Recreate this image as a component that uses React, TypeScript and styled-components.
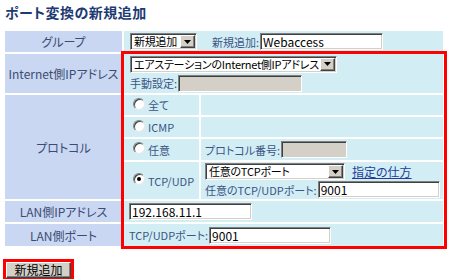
import React from "react";
import styled, { createGlobalStyle } from "styled-components";

const Global = createGlobalStyle`
  html, body { margin: 0; padding: 0; background: #fff; }
  body {
    font-family: "Noto Sans CJK JP", "Noto Sans", sans-serif;
    font-feature-settings: "palt";
    -webkit-font-smoothing: antialiased;
  }
  * { box-sizing: border-box; }
`;

const Page = styled.div`
  width: 450px;
  height: 279px;
  overflow: hidden;
`;

const Title = styled.h1`
  margin: 0;
  padding: 2px 0 0 5px;
  font-size: 14px;
  line-height: 20px;
  letter-spacing: 0.5px;
  font-weight: bold;
  color: #1d3a72;
`;

const TableWrap = styled.div`
  position: relative;
  margin: 7px 0 0 3px;
  width: 442px;
`;

const FormTable = styled.table`
  border-collapse: separate;
  border-spacing: 2px;
  table-layout: fixed;
  width: 442px;
  font-size: 11px;
  color: #3b5584;
`;

const Col = styled.col<{ $w: number }>`
  width: ${(p) => p.$w}px;
`;

const LabelCell = styled.td<{ $h?: number }>`
  padding: 0;
  background: #c9d7f2;
  color: #3b4c72;
  font-size: 12px;
  text-align: center;
  vertical-align: middle;
  white-space: nowrap;
  ${(p) => (p.$h ? `height: ${p.$h}px;` : "")}
`;

const ValueCell = styled.td<{ $h: number }>`
  padding: 0;
  height: ${(p) => p.$h}px;
  background: #d2edf4;
  vertical-align: middle;
  white-space: nowrap;
`;

const Line = styled.div<{ $pl?: number }>`
  display: flex;
  align-items: center;
  padding-left: ${(p) => p.$pl ?? 5}px;
`;

const Stack = styled.div<{ $pl?: number; $gap?: number }>`
  display: flex;
  flex-direction: column;
  align-items: flex-start;
  gap: ${(p) => p.$gap ?? 2}px;
  padding-left: ${(p) => p.$pl ?? 5}px;
`;

const FieldLabel = styled.span<{ $ml?: number }>`
  margin-left: ${(p) => p.$ml ?? 0}px;
  margin-right: 1px;
  font-size: 11px;
  line-height: 14px;
  color: #3b5584;
`;

const SelectBox = styled.span<{ $w: number; $ml?: number }>`
  display: inline-flex;
  align-items: center;
  justify-content: space-between;
  width: ${(p) => p.$w}px;
  height: 17px;
  margin-left: ${(p) => p.$ml ?? 0}px;
  background: #fff;
  border: 1px solid;
  border-color: #808080 #ffffff #ffffff #808080;
  box-shadow: inset 1px 1px 0 #404040, inset -1px -1px 0 #d4d0c8;
  padding: 1px 1px 1px 3px;
`;

const SelectText = styled.span`
  white-space: nowrap;
  font-size: 11px;
  line-height: 15px;
  letter-spacing: -0.25px;
  color: #000;
`;

const ArrowButton = styled.span`
  display: flex;
  flex: none;
  align-items: center;
  justify-content: center;
  width: 15px;
  height: 13px;
  background: #d4d0c8;
  border: 1px solid;
  border-color: #ffffff #404040 #404040 #ffffff;
  box-shadow: inset -1px -1px 0 #808080;
`;

const TextInput = styled.input<{ $w: number; $disabled?: boolean }>`
  width: ${(p) => p.$w}px;
  height: 17px;
  margin: 0;
  padding: 0 2px;
  font-family: inherit;
  font-feature-settings: "palt";
  font-size: 12px;
  color: #000;
  background: ${(p) => (p.$disabled ? "#d4d0c8" : "#fff")};
  border: 1px solid;
  border-color: #808080 #ffffff #ffffff #808080;
  box-shadow: inset 1px 1px 0 #404040, inset -1px -1px 0 #d4d0c8;
  outline: none;
`;

const RadioLine = styled.label`
  display: flex;
  align-items: center;
  padding-left: 9px;
  font-size: 11px;
  color: #3b5584;
`;

const RadioMark = styled.span<{ $checked?: boolean }>`
  position: relative;
  width: 12px;
  height: 12px;
  margin: 0 3px 3px 0;
  border-radius: 50%;
  background: #fff;
  border: 1px solid;
  border-color: #808080 #e8e8e8 #e8e8e8 #808080;
  box-shadow: inset 1px 1px 0 #404040;
  &::after {
    content: "";
    display: ${(p) => (p.$checked ? "block" : "none")};
    position: absolute;
    left: 3px;
    top: 3px;
    width: 4px;
    height: 4px;
    border-radius: 50%;
    background: #000;
  }
`;

const HelpLink = styled.a`
  margin-left: 7px;
  font-size: 12px;
  color: #1f3d99;
  text-decoration: underline;
`;

const Highlight = styled.div`
  position: absolute;
  left: 118px;
  top: 22px;
  width: 326px;
  height: 198px;
  border: 3px solid #ff0000;
  pointer-events: none;
`;

const ButtonArea = styled.div`
  margin: 8px 0 0 3px;
`;

const ButtonFrame = styled.span`
  display: inline-block;
  border: 3px solid #ff0000;
  line-height: 0;
`;

const PushButton = styled.button`
  width: 65px;
  height: 16px;
  margin: 0;
  padding: 0;
  font-family: inherit;
  font-feature-settings: "palt";
  font-size: 12px;
  line-height: 12px;
  color: #000;
  background: #d4d0c8;
  border: 1px solid;
  border-color: #ffffff #404040 #404040 #ffffff;
  box-shadow: inset -1px -1px 0 #808080;
`;

const DownArrow = () => (
  <svg width="7" height="4" viewBox="0 0 7 4">
    <path d="M0 0H7L3.5 4Z" fill="#000" />
  </svg>
);

const Select = ({ w, ml, text }: { w: number; ml?: number; text: string }) => (
  <SelectBox $w={w} $ml={ml}>
    <SelectText>{text}</SelectText>
    <ArrowButton>
      <DownArrow />
    </ArrowButton>
  </SelectBox>
);

const Radio = ({ label, checked }: { label: string; checked?: boolean }) => (
  <RadioLine>
    <RadioMark $checked={checked} />
    {label}
  </RadioLine>
);

export default function App() {
  return (
    <Page>
      <Global />
      <Title>ポート変換の新規追加</Title>
      <TableWrap>
        <FormTable>
          <colgroup>
            <Col $w={117} />
            <Col $w={75} />
            <Col $w={242} />
          </colgroup>
          <tbody>
            <tr>
              <LabelCell>グループ</LabelCell>
              <ValueCell colSpan={2} $h={21}>
                <Line $pl={6}>
                  <Select w={67} text="新規追加" />
                  <FieldLabel $ml={15}>新規追加:</FieldLabel>
                  <TextInput $w={123} readOnly defaultValue="Webaccess" />
                </Line>
              </ValueCell>
            </tr>
            <tr>
              <LabelCell>Internet側IPアドレス</LabelCell>
              <ValueCell colSpan={2} $h={39}>
                <Stack $pl={6} $gap={2}>
                  <Select w={207} text="エアステーションのInternet側IPアドレス" />
                  <Line $pl={0}>
                    <FieldLabel>手動設定:</FieldLabel>
                    <TextInput $w={124} $disabled readOnly defaultValue="" />
                  </Line>
                </Stack>
              </ValueCell>
            </tr>
            <tr>
              <LabelCell rowSpan={4}>プロトコル</LabelCell>
              <ValueCell $h={20}>
                <Radio label="全て" />
              </ValueCell>
              <ValueCell $h={20} />
            </tr>
            <tr>
              <ValueCell $h={20}>
                <Radio label="ICMP" />
              </ValueCell>
              <ValueCell $h={20} />
            </tr>
            <tr>
              <ValueCell $h={21}>
                <Radio label="任意" />
              </ValueCell>
              <ValueCell $h={21}>
                <Line $pl={4}>
                  <FieldLabel>プロトコル番号:</FieldLabel>
                  <TextInput $w={66} $disabled readOnly defaultValue="" />
                </Line>
              </ValueCell>
            </tr>
            <tr>
              <ValueCell $h={37}>
                <Radio label="TCP/UDP" checked />
              </ValueCell>
              <ValueCell $h={37}>
                <Stack $pl={4} $gap={1}>
                  <Line $pl={0}>
                    <Select w={140} text="任意のTCPポート" />
                    <HelpLink href="#">指定の仕方</HelpLink>
                  </Line>
                  <Line $pl={0}>
                    <FieldLabel>任意のTCP/UDPポート:</FieldLabel>
                    <TextInput $w={122} readOnly defaultValue="9001" />
                  </Line>
                </Stack>
              </ValueCell>
            </tr>
            <tr>
              <LabelCell>LAN側IPアドレス</LabelCell>
              <ValueCell colSpan={2} $h={21}>
                <Line $pl={5}>
                  <TextInput $w={123} readOnly defaultValue="192.168.11.1" />
                </Line>
              </ValueCell>
            </tr>
            <tr>
              <LabelCell>LAN側ポート</LabelCell>
              <ValueCell colSpan={2} $h={22}>
                <Line $pl={5}>
                  <FieldLabel>TCP/UDPポート:</FieldLabel>
                  <TextInput $w={122} readOnly defaultValue="9001" />
                </Line>
              </ValueCell>
            </tr>
          </tbody>
        </FormTable>
        <Highlight />
      </TableWrap>
      <ButtonArea>
        <ButtonFrame>
          <PushButton type="button">新規追加</PushButton>
        </ButtonFrame>
      </ButtonArea>
    </Page>
  );
}
